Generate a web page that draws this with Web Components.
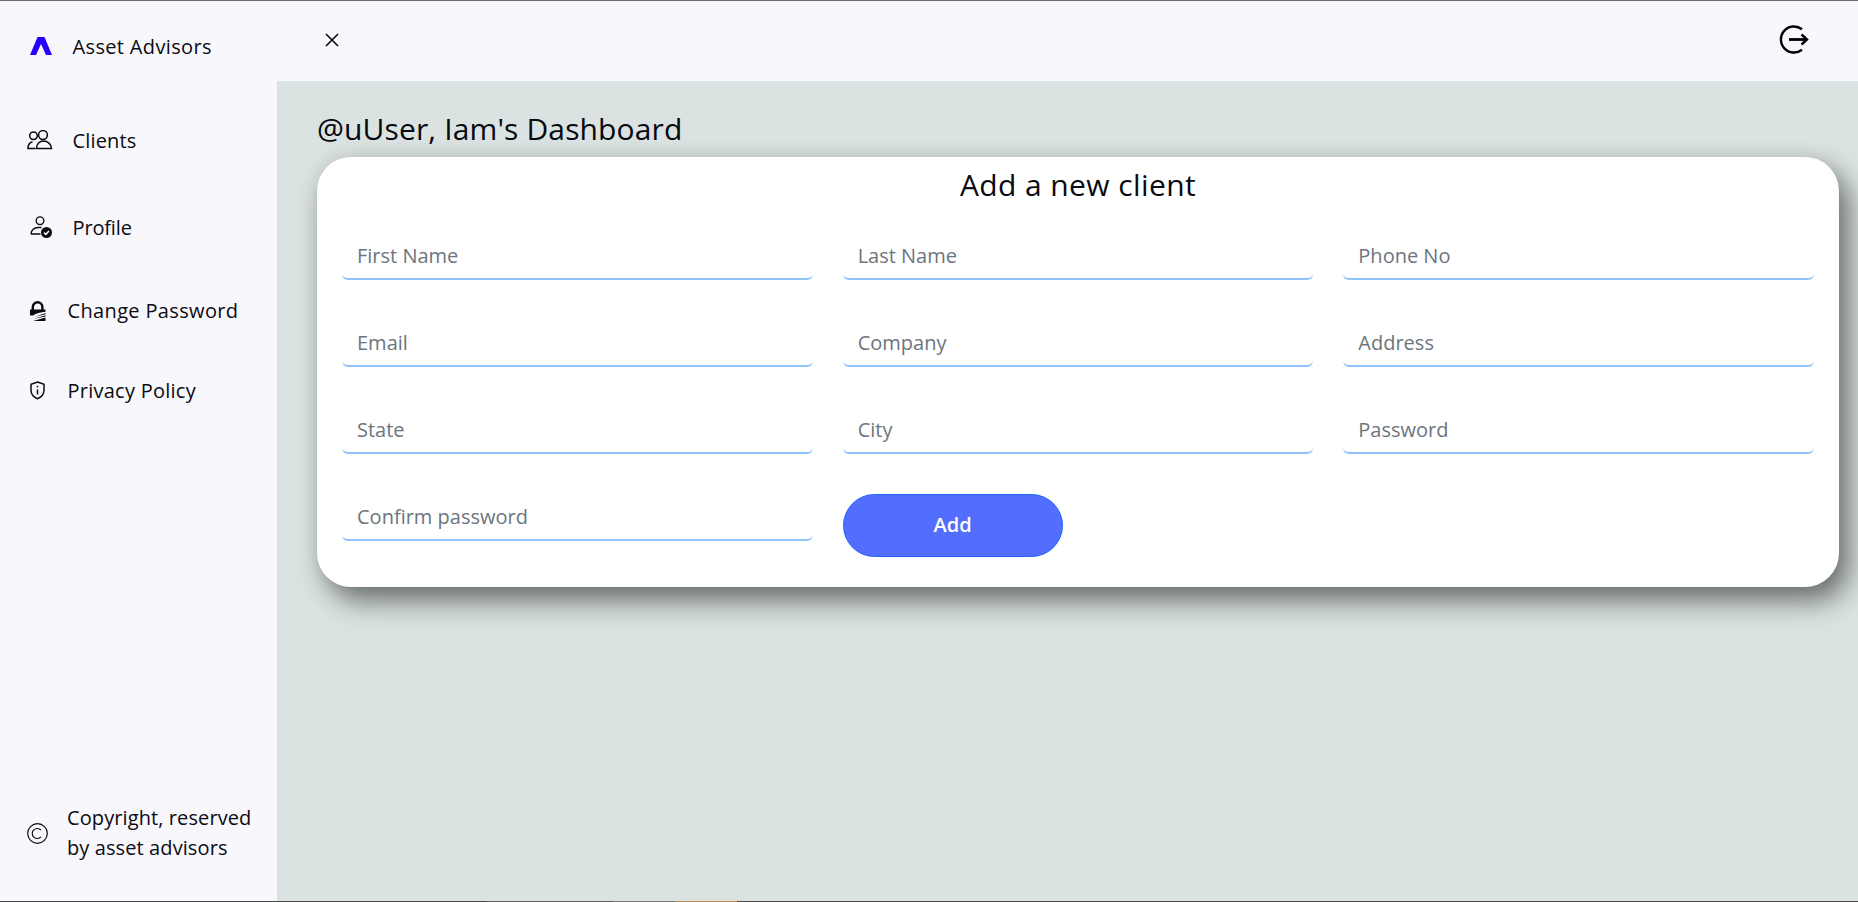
<!DOCTYPE html>
<html lang="en"><head><meta charset="utf-8"><title>Dashboard</title>
<style>
html,body{margin:0;height:100%;overflow:hidden}
body{font-family:"Open Sans","Liberation Sans",sans-serif;color:#0b0b12}
</style></head><body>
<template id="t-app"><style>
:host{display:grid;grid-template-columns:277px 1fr;grid-template-rows:1px 1fr 1px;height:902px;width:1858px;background:#f7f7fc}
.top{grid-column:1/3;background:#6b6b6b}
.bottom{grid-column:1/3;display:flex;background:#4f4f4f}
.bottom i{display:block;height:1px}
.side{grid-row:2;min-height:0}
.main{grid-row:2;display:flex;flex-direction:column;min-width:0;min-height:0}
</style>
<div class="top"></div>
<div class="side"><slot name="side"></slot></div>
<div class="main"><slot></slot></div>
<div class="bottom"><i style="width:487px;background:#4a4a4a"></i><i style="width:126px;background:#5a5a5a"></i><i style="width:62px;background:#777"></i><i style="width:62px;background:#c98a4e"></i><i style="flex:1;background:#4a4a4a"></i></div>
</template>

<template id="t-side"><style>
:host{display:flex;flex-direction:column;height:100%;background:#f7f7fc}
.fill{flex:1}
</style><slot></slot><div class="fill"></div><slot name="foot"></slot></template>

<template id="t-nav"><style>
:host{display:flex;align-items:center;height:var(--h);box-sizing:border-box;padding-left:var(--ix,27px);font-size:20px;letter-spacing:var(--ls,.35px);color:#0b0b12}
.ic{width:var(--iw,45px);display:flex;align-items:center;flex:none}
</style><span class="ic"><slot name="icon"></slot></span><span><slot></slot></span></template>

<template id="t-foot"><style>
:host{display:flex;align-items:center;height:var(--h);padding-left:27px;font-size:20px;line-height:30px;letter-spacing:.1px;color:#0b0b12}
.ic{width:40px;flex:none;display:flex}
</style><span class="ic"><slot name="icon"></slot></span><span><slot></slot></span></template>

<template id="t-head"><style>
:host{display:flex;align-items:center;justify-content:space-between;height:80px;box-sizing:border-box;flex:none;background:#f7f7fc;padding:0 49px 2px 48px}
::slotted(svg){display:block}
</style><slot name="start"></slot><slot name="end"></slot></template>

<template id="t-content"><style>
:host{display:flex;flex-direction:column;flex:1;background:#dae3e2;padding:22px 19px 0 40px;min-height:0}
h1{margin:0;font-weight:400;font-size:30px;line-height:51px;height:54px;letter-spacing:.13px;color:#08080f}
</style><h1><slot name="title"></slot></h1><slot></slot></template>

<template id="t-card"><style>
:host{display:block;height:430px;box-sizing:border-box;background:#fff;border-radius:34px;padding:0 25px;box-shadow:10px 14px 28px rgba(0,0,0,.5),0 0 20px rgba(0,0,0,.07)}
h2{margin:0;text-align:center;font-weight:400;font-size:30px;line-height:56px;height:60px;letter-spacing:.4px;color:#0a0a10}
.grid{display:grid;grid-template-columns:repeat(3,1fr);column-gap:30px;row-gap:27px;padding-top:3px;align-items:start}
</style><h2><slot name="title"></slot></h2><div class="grid"><slot></slot></div></template>

<template id="t-field"><style>
:host{display:flex;align-items:center;box-sizing:border-box;height:60px;padding:12px 15px 0;font-size:20px;color:#6c757d;border-bottom:2px solid #90c2fb;border-radius:0 0 6px 6px}
</style><slot></slot></template>

<template id="t-btn"><style>
:host{display:block;padding-top:13px}
button{display:block;width:220px;height:63px;border:1px solid #1f66ff;border-radius:32px;background:#536dfe;color:#fff;font:600 20px "Open Sans","Liberation Sans",sans-serif;padding:0 0 2px}
</style><button type="button"><slot></slot></button></template>

<x-app>
  <x-side slot="side">
    <x-nav style="--h:90px;--ix:30px;--iw:42.5px">
      <svg slot="icon" style="display:block" width="22" height="18" viewBox="0 0 22 18"><path fill="#2600ff" d="M7.500 0h7L22 18h-6L11 7 6 18H0z"/></svg>Asset Advisors</x-nav>
    <x-nav style="--h:98px;--iw:45.500px;--ls:.15px">
      <svg slot="icon" style="display:block" width="26" height="20" viewBox="0 0 26 20" fill="none" stroke="#0b0b12" stroke-width="1.500"><circle cx="6.500" cy="5.700" r="3.800"/><circle cx="16" cy="5" r="4.400"/><path d="M8.500 18.500H1c0-3.500 1.600-6 4.500-6.700"/><path d="M9.500 18.500c0-4.500 3-7.500 7-7.500s8 3 8 7.500z"/></svg>Clients</x-nav>
    <x-nav style="--h:76px;--ix:30px;--iw:42.500px;--ls:-.15px">
      <svg slot="icon" style="display:block" width="22" height="23" viewBox="0 0 22 23" fill="none" stroke="#0b0b12" stroke-width="1.400"><circle cx="10" cy="4.700" r="3.800"/><path d="M1 18c0-3.800 3.500-6.500 7-6.500h3.500M1 18h9.500"/><circle cx="16.500" cy="16.500" r="5.500" fill="#0b0b12" stroke="none"/><path d="M14 16.500l1.900 1.900 3-3.400" stroke="#fff" stroke-width="1.500"/></svg>Profile</x-nav>
    <x-nav style="--h:90px;--ix:29px;--iw:38.500px">
      <svg slot="icon" style="display:block" width="17" height="21" viewBox="0 0 17 21" fill="none"><path d="M3.800 10V7a4.800 4.800 0 0 1 9.600 0v3" stroke="#0b0b12" stroke-width="2.400"/><path fill="#0b0b12" d="M1 9.500h15.500v2.300c-5 .3-9.500 1.700-12.500 3.700H1z"/><path fill="#0b0b12" d="M16.500 13v1.300L6 16.800zM16.500 15.300v1.300L5 18.800zM16.500 17.600V21H4z"/></svg>Change Password</x-nav>
    <x-nav style="--h:70px;--ix:30px;--iw:37.500px;--ls:.25px">
      <svg slot="icon" style="display:block" width="15" height="19" viewBox="0 0 15 19" fill="none" stroke="#0b0b12" stroke-width="1.500"><path d="M7.500 1L14 3.300v6c0 4-3 7-6.500 8.500C4 16.300 1 13.300 1 9.300v-6z"/><path d="M7.500 8.500v5"/><circle cx="7.500" cy="5.600" r=".9" fill="#0b0b12" stroke="none"/></svg>Privacy Policy</x-nav>
    <x-foot slot="foot" style="--h:136px">
      <svg slot="icon" style="display:block" width="21" height="21" viewBox="0 0 21 21" fill="none" stroke="#0b0b12" stroke-width="1.200"><circle cx="10.500" cy="10.500" r="9.800"/><path d="M14 7.200a5 5 0 1 0 0 6.600"/></svg>
      Copyright, reserved<br>by asset advisors</x-foot>
  </x-side>
  <x-head>
    <svg slot="start" width="14" height="14" viewBox="0 0 14 14" fill="none" stroke="#0b0b12" stroke-width="1.600"><path d="M1 1l12 12M13 1L1 13"/></svg>
    <svg slot="end" width="30" height="30" viewBox="0 0 30 30" fill="none" stroke="#000" stroke-width="2.400"><path d="M23 4.300A13 13 0 1 0 23 24.700"/><path d="M10 14.500h17" stroke-width="2.800"/><path d="M22.500 9.500l5.500 5-5.500 5" stroke-width="2.400"/></svg>
  </x-head>
  <x-content>
    <span slot="title">@uUser, Iam's Dashboard</span>
    <x-card>
      <span slot="title">Add a new client</span>
      <x-field>First Name</x-field><x-field>Last Name</x-field><x-field>Phone No</x-field>
      <x-field>Email</x-field><x-field>Company</x-field><x-field>Address</x-field>
      <x-field>State</x-field><x-field>City</x-field><x-field>Password</x-field>
      <x-field>Confirm password</x-field><x-btn>Add</x-btn>
    </x-card>
  </x-content>
</x-app>
<script>
const reg=(name,id)=>customElements.define(name,class extends HTMLElement{
  constructor(){super();this.attachShadow({mode:"open"}).appendChild(document.getElementById(id).content.cloneNode(true));}
});
[["x-app","t-app"],["x-side","t-side"],["x-nav","t-nav"],["x-foot","t-foot"],["x-head","t-head"],["x-content","t-content"],["x-card","t-card"],["x-field","t-field"],["x-btn","t-btn"]].forEach(([n,i])=>reg(n,i));
</script>
</body></html>
